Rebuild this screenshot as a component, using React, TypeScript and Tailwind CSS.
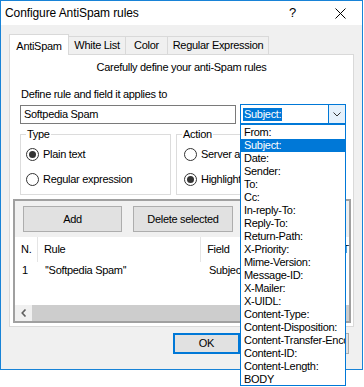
import React from "react";

const headers = [
  "From:",
  "Subject:",
  "Date:",
  "Sender:",
  "To:",
  "Cc:",
  "In-reply-To:",
  "Reply-To:",
  "Return-Path:",
  "X-Priority:",
  "Mime-Version:",
  "Message-ID:",
  "X-Mailer:",
  "X-UIDL:",
  "Content-Type:",
  "Content-Disposition:",
  "Content-Transfer-Encoding:",
  "Content-ID:",
  "Content-Length:",
  "BODY",
];

const tabs = ["AntiSpam", "White List", "Color", "Regular Expression"];
const tabWidths = ["w-[60px]", "w-[57px]", "w-[42px]", "w-[101px]"];

const Radio = ({ checked, label }: { checked?: boolean; label: string }) => (
  <div className="flex items-center h-[16px] gap-[4px]">
    <span className="w-[13px] h-[13px] rounded-full border border-[#333] bg-white flex items-center justify-center">
      {checked && <span className="w-[7px] h-[7px] rounded-full bg-[#333]" />}
    </span>
    <span className="whitespace-nowrap">{label}</span>
  </div>
);

const GroupBox = ({
  title,
  width,
  children,
}: {
  title: string;
  width: string;
  children: React.ReactNode;
}) => (
  <fieldset className={`${width} h-[67px] border border-[#dcdcdc] overflow-hidden`}>
    <legend className="ml-[5px] px-[1px] leading-[13px]">{title}</legend>
    {children}
  </fieldset>
);

export default function App() {
  return (
    <div
      className="relative w-[364px] h-[387px] bg-white text-[11px] tracking-[-0.3px] text-black overflow-hidden"
      style={{ fontFamily: '"Liberation Sans", Arial, sans-serif' }}
    >
      {/* dialog window */}
      <div className="w-[363px] h-[370px] border border-[#1883d7] bg-[#f0f0f0] flex flex-col">
        {/* title bar */}
        <div className="h-[24px] bg-white flex items-center pl-[4px] text-[12px] tracking-[-0.1px] shrink-0">
          <span className="flex-1">Configure AntiSpam rules</span>
          <span className="w-[10px] mr-[36px] text-[13px]">?</span>
          <svg width="11" height="11" viewBox="0 0 11 11" className="mr-[16px]">
            <path d="M0.5 0.5 L10.5 10.5 M10.5 0.5 L0.5 10.5" stroke="#000" strokeWidth="1" />
          </svg>
        </div>

        {/* tabs */}
        <div className="flex items-end h-[20px] mt-[9px] pl-[8px] shrink-0">
          {tabs.map((t, i) =>
            i === 0 ? (
              <div
                key={t}
                className={`${tabWidths[i]} h-[21px] -mb-px relative z-10 bg-white border border-b-0 border-[#d9d9d9] flex items-start pt-[3px] justify-center`}
              >
                {t}
              </div>
            ) : (
              <div
                key={t}
                className={`${tabWidths[i]} h-[18px] bg-[#f0f0f0] border-t border-r border-[#d9d9d9] flex items-center justify-center`}
              >
                {t}
              </div>
            )
          )}
        </div>

        {/* tab panel */}
        <div className="ml-[8px] w-[345px] h-[273px] bg-white border border-[#d9d9d9] flex flex-col shrink-0">
          <div className="mt-[6px] h-[13px] leading-[13px] text-center">
            Carefully define your anti-Spam rules
          </div>
          <div className="mt-[14px] h-[13px] leading-[13px] pl-[11px]">
            Define rule and field it applies to
          </div>

          <div className="mt-[3px] pl-[10px] flex items-start h-[20px]">
            <div className="mt-[1px] w-[216px] h-[19px] border border-[#7a7a7a] bg-white flex items-center pl-[3px]">
              Softpedia Spam
            </div>
            <div className="ml-[4px] w-[106px] h-[20px] border border-[#0078d7] bg-white flex items-stretch">
              <div className="flex-1 flex items-center pl-[2px]">
                <span className="bg-[#0078d7] text-white leading-[13px] px-px">Subject:</span>
              </div>
              <div className="w-[17px] border-l border-[#0078d7] bg-[#e5f1fb] flex items-center justify-center">
                <svg width="8" height="5" viewBox="0 0 8 5">
                  <path d="M0.5 0.5 L4 4 L7.5 0.5" stroke="#333" strokeWidth="1" fill="none" />
                </svg>
              </div>
            </div>
          </div>

          <div className="mt-[4px] pl-[10px] flex gap-[5px]">
            <GroupBox title="Type" width="w-[151px]">
              <div className="pl-[5px] pt-[5px] flex flex-col gap-[9px]">
                <Radio checked label="Plain text" />
                <Radio label="Regular expression" />
              </div>
            </GroupBox>
            <GroupBox title="Action" width="w-[170px]">
              <div className="pl-[7px] pt-[5px] flex flex-col gap-[9px]">
                <Radio label="Server action" />
                <Radio checked label="Highlight" />
              </div>
            </GroupBox>
          </div>

          {/* sunken frame with buttons and list */}
          <div className="mt-[4px] ml-[3px] w-[338px] h-[124px] border-2 border-[#a0a0a0] bg-[#f0f0f0] flex flex-col">
            <div className="mt-[5px] pl-[8px] flex gap-[11px] h-[26px]">
              <div className="w-[99px] h-[26px] bg-[#e1e1e1] border border-[#adadad] flex items-center justify-center">
                Add
              </div>
              <div className="w-[100px] h-[26px] bg-[#e1e1e1] border border-[#adadad] flex items-center justify-center">
                Delete selected
              </div>
            </div>
            <div className="mt-[5px] flex-1 bg-white flex flex-col">
              <div className="h-[25px] flex items-center shrink-0">
                <div className="w-[23px] pl-[6px] h-full flex items-center border-r border-[#e5e5e5]">N.</div>
                <div className="w-[164px] pl-[6px] h-full flex items-center border-r border-[#e5e5e5]">Rule</div>
                <div className="w-[140px] pl-[6px] h-full flex items-center border-r border-[#e5e5e5]">Field</div>
                <div className="pl-[2px]">T</div>
              </div>
              <div className="h-[17px] flex items-center shrink-0">
                <div className="w-[23px] pl-[7px]">1</div>
                <div className="w-[164px] pl-[7px]">''Softpedia Spam''</div>
                <div className="w-[140px] pl-[7px]">Subject:</div>
              </div>
              <div className="flex-1" />
              <div className="h-[16px] flex shrink-0">
                <div className="w-[17px] bg-[#f0f0f0] flex items-center justify-center">
                  <svg width="6" height="8" viewBox="0 0 6 8">
                    <path d="M4.5 0.5 L1.2 4 L4.5 7.5" stroke="#606060" strokeWidth="1.6" fill="none" />
                  </svg>
                </div>
                <div className="flex-1 bg-[#cdcdcd]" />
              </div>
            </div>
          </div>
        </div>

        {/* dialog buttons */}
        <div className="mt-[6px] flex justify-end gap-[10px] pr-[13px]">
          <div className="w-[67px] h-[21px] bg-[#e1e1e1] border-2 border-[#0078d7] flex items-center justify-center">
            OK
          </div>
          <div className="w-[99px] h-[21px] bg-[#e1e1e1] border border-[#adadad] flex items-center justify-center">
            Cancel
          </div>
        </div>
      </div>

      {/* open combo box list */}
      <div className="absolute left-[240px] top-[124px] w-[106px] h-[262px] bg-white border border-[#0078d7] pt-px overflow-hidden">
        {headers.map((h, i) => (
          <div
            key={h}
            className={`h-[13px] leading-[13px] pl-[3px] whitespace-nowrap ${
              i === 1 ? "bg-[#0078d7] text-white" : ""
            }`}
          >
            {h}
          </div>
        ))}
      </div>
    </div>
  );
}
